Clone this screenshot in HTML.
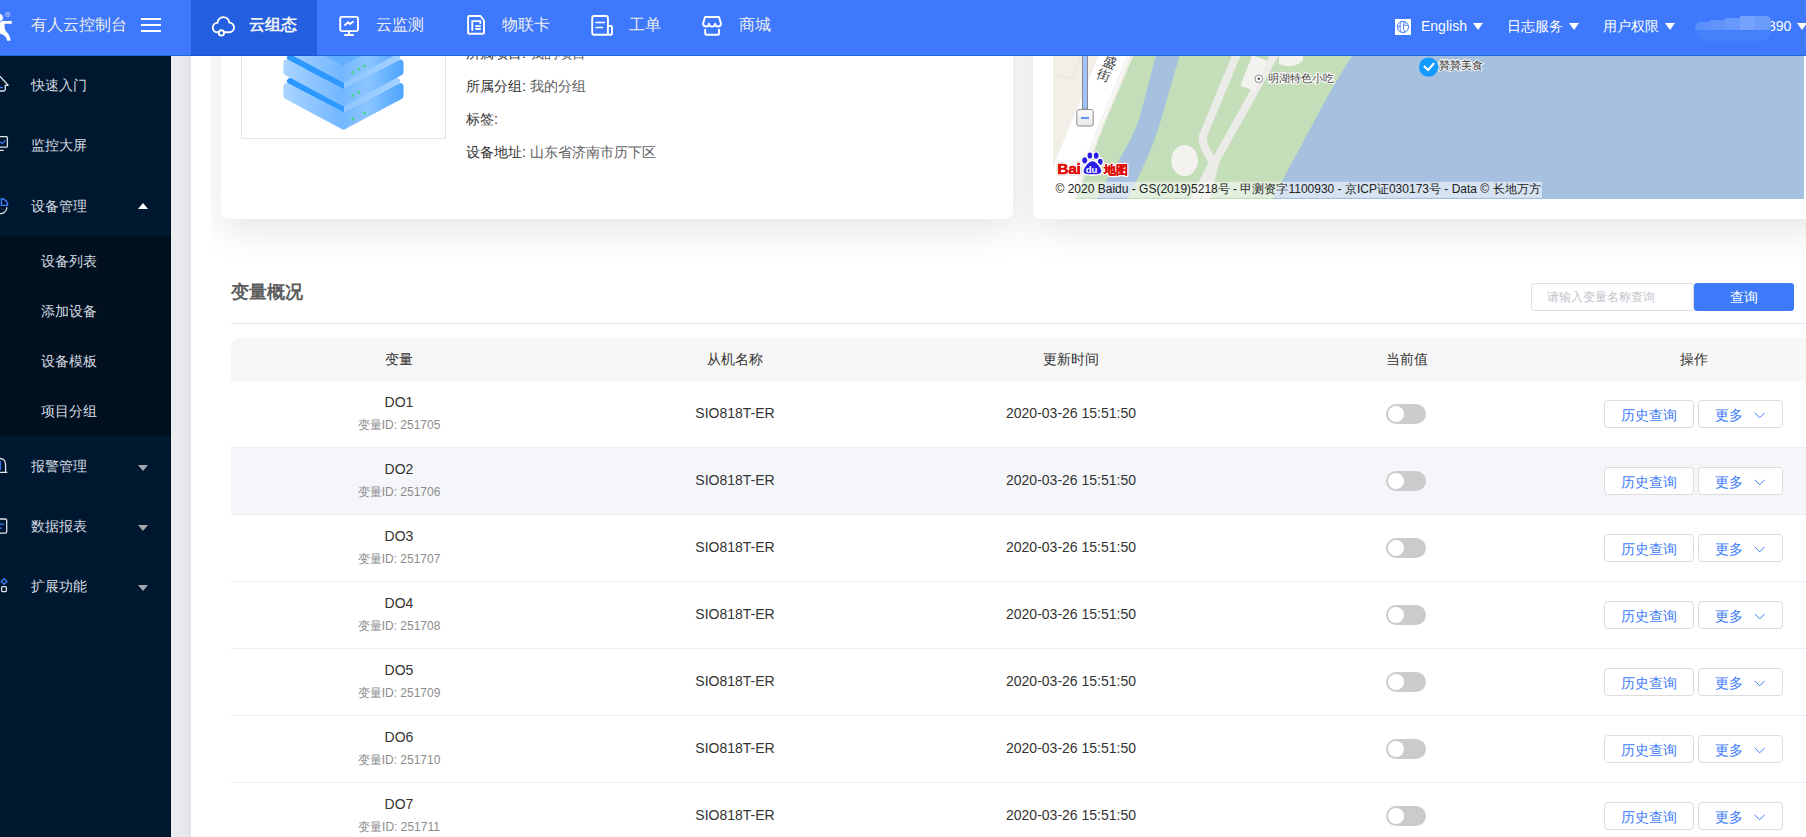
<!DOCTYPE html>
<html><head><meta charset="utf-8">
<style>
*{box-sizing:border-box;margin:0;padding:0}
html,body{width:1806px;height:837px;overflow:hidden;background:#fff;font-family:"Liberation Sans",sans-serif;position:relative}
.abs{position:absolute}
svg{position:absolute;overflow:visible}
#hdr{left:0;top:0;width:1806px;height:56px;background:#3d78fd;border-bottom:1px solid #1b6dd3;z-index:10}
#side{left:0;top:56px;width:171px;height:781px;background:#00182f;z-index:5}
#strip{left:171px;top:56px;width:20px;height:781px;background:linear-gradient(90deg,#eceef0,#e2e4e7)}
.nav{position:absolute;top:0;height:55px;color:#ecedf2;font-size:16px;line-height:50px;white-space:nowrap}
.hr{position:absolute;top:0;height:55px;color:#fff;font-size:14px;line-height:52px;white-space:nowrap}
.tri{position:absolute;width:0;height:0;border-left:5.5px solid transparent;border-right:5.5px solid transparent;border-top:7px solid #fff}
.mi{position:absolute;left:31px;font-size:14px;color:#d5dae2;line-height:20px;white-space:nowrap}
.si{position:absolute;left:41px;font-size:14px;color:#d5dae2;line-height:20px;white-space:nowrap}
.dtri{position:absolute;left:138px;width:0;height:0;border-left:5px solid transparent;border-right:5px solid transparent;border-top:6px solid #a3a7ae}
.card{position:absolute;background:#fff;border-radius:8px}
.info{position:absolute;left:466px;font-size:14px;color:#333;line-height:20px;white-space:nowrap}
.info span{color:#5e5e5e}
.th{position:absolute;top:338px;height:43px;line-height:43px;font-size:14px;color:#333;text-align:center}
.row{position:absolute;left:231px;width:1600px;height:67px;border-bottom:1px solid #ebeef5}
.c{position:absolute;text-align:center;white-space:nowrap}
.btn{position:absolute;height:28px;border:1px solid #dcdcdc;border-radius:4px;background:#fff;color:#3e7bfa;font-size:14px;line-height:26px;text-align:center;white-space:nowrap}
.tog{position:absolute;left:1386px;width:40px;height:20px;border-radius:10px;background:#cbcbcb}
.tog:after{content:"";position:absolute;left:2px;top:2px;width:16px;height:16px;border-radius:50%;background:#fff}
</style></head><body>
<!-- sidebar -->
<div id="side" class="abs">
  <div class="abs" style="left:0;top:180px;width:171px;height:200px;background:#00101f"></div>
  <svg style="left:0;top:0" width="20" height="781" viewBox="0 56 20 781">
    <!-- home -->
    <path d="M-3 80 L0.3 76.6 L8.1 85.3 H5.3 V89.5 Q5.3 91 3.8 91 H-3" fill="none" stroke="#dfe3ea" stroke-width="1.3" stroke-linejoin="round"/>
    <path d="M-1 87.5 H2.9" stroke="#3d7bf8" stroke-width="1.3"/>
    <!-- monitor -->
    <path d="M-3 136.7 H6.3 Q7.4 136.7 7.4 137.8 V146.2 Q7.4 147.2 6.3 147.2 H-3" fill="none" stroke="#dfe3ea" stroke-width="1.3"/>
    <path d="M-1 150.4 H3.7" stroke="#dfe3ea" stroke-width="1.3"/>
    <path d="M-1 141.6 L2.4 143.4 L5.4 140.4" fill="none" stroke="#3d7bf8" stroke-width="1.3"/>
    <!-- pie -->
    <path d="M1.4 198.7 A6.3 6.3 0 0 1 7.6 205.4 H1.4 Z" fill="none" stroke="#3d7bf8" stroke-width="1.4"/>
    <path d="M6.9 207.2 A6.4 6.4 0 0 1 -1 213.4" fill="none" stroke="#dfe3ea" stroke-width="1.3"/>
    <!-- bell -->
    <path d="M-3 458.6 Q5.6 457.6 5.6 464.5 V472.4 H7.3 M-3 472.4 H6" fill="none" stroke="#dfe3ea" stroke-width="1.3"/>
    <path d="M0.3 461 V470" stroke="#3d7bf8" stroke-width="1.3"/>
    <!-- data -->
    <path d="M-3 519 H5.4 Q6.7 519 6.7 520.3 V531.8 Q6.7 533.1 5.4 533.1 H-3" fill="none" stroke="#dfe3ea" stroke-width="1.3"/>
    <path d="M-1 524.2 H3.9 M-1 528.2 H1.9" stroke="#3d7bf8" stroke-width="1.3"/>
    <!-- ext -->
    <path d="M4.1 578.7 L6.9 581.5 L4.1 584.3 L1.3 581.5 Z" fill="none" stroke="#3d7bf8" stroke-width="1.3"/>
    <rect x="1.6" y="586.7" width="4.8" height="4.9" rx="1" fill="none" stroke="#dfe3ea" stroke-width="1.3"/>
  </svg>
  <div class="mi" style="top:19px">快速入门</div>
  <div class="mi" style="top:79px">监控大屏</div>
  <div class="mi" style="top:140px">设备管理</div>
  <div class="abs" style="left:137.7px;top:146.7px;width:0;height:0;border-left:5.3px solid transparent;border-right:5.3px solid transparent;border-bottom:6.4px solid #fff"></div>
  <div class="si" style="top:195px">设备列表</div>
  <div class="si" style="top:245px">添加设备</div>
  <div class="si" style="top:295px">设备模板</div>
  <div class="si" style="top:345px">项目分组</div>
  <div class="mi" style="top:400px">报警管理</div>
  <div class="dtri" style="top:408.8px"></div>
  <div class="mi" style="top:460px">数据报表</div>
  <div class="dtri" style="top:468.8px"></div>
  <div class="mi" style="top:520px">扩展功能</div>
  <div class="dtri" style="top:528.8px"></div>
</div>
<div id="strip" class="abs"></div>
<!-- top cards -->
<div class="abs" style="left:211px;top:0;width:1595px;height:300px;overflow:hidden">
<div class="card" style="left:10px;top:-40px;width:792px;height:259px;box-shadow:0 12px 36px rgba(0,0,0,0.1)"></div>
<div class="card" style="left:822px;top:-40px;width:800px;height:259px;box-shadow:0 12px 36px rgba(0,0,0,0.1)"></div>
<div class="card" style="left:10px;top:-40px;width:792px;height:259px"></div>
<div class="card" style="left:822px;top:-40px;width:800px;height:259px"></div>
</div>
<div class="abs" style="left:241px;top:-40px;width:205px;height:179px;border:1px solid #e6e6e6"></div>
<svg style="left:241px;top:0" width="205" height="139" viewBox="241 0 205 139">
  <defs>
    <linearGradient id="sb" x1="283.5" x2="403.5" y1="0" y2="0" gradientUnits="userSpaceOnUse">
      <stop offset="0" stop-color="#aad4ff"/><stop offset="0.49" stop-color="#72b7ff"/><stop offset="0.51" stop-color="#76b9ff"/><stop offset="0.7" stop-color="#8cc5ff"/><stop offset="1" stop-color="#4ba4ff"/>
    </linearGradient>
    <linearGradient id="tf" x1="283.5" x2="403.5" y1="0" y2="0" gradientUnits="userSpaceOnUse">
      <stop offset="0" stop-color="#2a96ff"/><stop offset="0.5" stop-color="#2f99ff"/><stop offset="0.5" stop-color="#8fc7ff"/><stop offset="1" stop-color="#a4d1ff"/>
    </linearGradient>
    <g id="slab">
      <polygon points="289.92,81.16 343.50,52.40 397.08,81.16 343.50,109.02" fill="url(#tf)" stroke="url(#tf)" stroke-width="6" stroke-linejoin="round"/>
      <polygon points="286.50,86.14 343.50,115.78 400.50,86.14 400.50,96.01 343.50,126.60 286.50,96.01" fill="url(#sb)" stroke="url(#sb)" stroke-width="6" stroke-linejoin="round"/>
    </g>
  </defs>
  <use href="#slab"/>
  <use href="#slab" transform="translate(0,-23.6)"/>
  <g transform="translate(0,-47.2)">
    <polygon points="289.92,81.16 343.50,52.40 397.08,81.16 343.50,109.02" fill="#62afff" stroke="#62afff" stroke-width="6" stroke-linejoin="round"/>
    <polygon points="286.50,86.14 343.50,115.78 400.50,86.14 400.50,96.01 343.50,126.60 286.50,96.01" fill="url(#sb)" stroke="url(#sb)" stroke-width="6" stroke-linejoin="round"/>
  </g>
  <g fill="#44d882">
    <ellipse cx="352.7" cy="119" rx="1.4" ry="1.5"/><ellipse cx="364.6" cy="112.8" rx="1.4" ry="1.5"/>
    <ellipse cx="352.7" cy="95.6" rx="1.4" ry="1.5"/><ellipse cx="358.6" cy="92.3" rx="1.4" ry="1.5"/>
    <ellipse cx="352.7" cy="72.4" rx="1.4" ry="1.5"/><ellipse cx="358.6" cy="69" rx="1.4" ry="1.5"/><ellipse cx="364.6" cy="66" rx="1.4" ry="1.5"/>
  </g>
</svg>
<div class="info" style="top:43px">所属项目: <span>我的项目</span></div>
<div class="info" style="top:76px">所属分组: <span>我的分组</span></div>
<div class="info" style="top:109px">标签:</div>
<div class="info" style="top:142px">设备地址: <span>山东省济南市历下区</span></div>

<!-- map -->
<svg style="left:1053px;top:40px;overflow:hidden" width="751" height="159" viewBox="1053 40 751 159">
  <rect x="1053" y="40" width="751" height="159" fill="#f2efe9"/>
  <path d="M1055 165 L1067 140" stroke="#e4e1db" stroke-width="0.8"/>
  <path d="M1053 73 L1073 79 L1085 45" fill="none" stroke="#e4e1db" stroke-width="0.8"/>
  <polygon points="1105,40 1136,40 1072,199 1040,199" fill="#ffffff"/>
  <path d="M1134 40 L1070 199" stroke="#e2dfd9" stroke-width="0.8"/>
  <polygon points="1140,40 1804,40 1804,199 1076,199 1104,125" fill="#c3deb9"/>
  <path d="M1160,40 L1139,120 C1128,150 1108,175 1097,199 L1127,199 C1140,175 1152,150 1161,120 L1184,40 Z" fill="#a6c0e0"/>
  <path d="M1239 40 L1236 56 L1203 136 C1201 145 1209 155 1213 162 L1192 205" fill="none" stroke="#ebebe7" stroke-width="8"/>
  <path d="M1283 40 L1216 160 L1204 205" fill="none" stroke="#ebebe7" stroke-width="8"/>
  <ellipse cx="1184.6" cy="160.5" rx="13.3" ry="15.5" fill="#f4f2ee"/>
  <polygon points="1252.3,55 1267.5,61 1256,91.4 1240.4,85.7" fill="#f4f2ee"/>
  <path d="M1279 40 H1303 V60 Q1298 67 1285 66 L1279 64 Z" fill="#f4f2ee"/>
  <path d="M1362,40 L1352,56 C1340,75 1330,92 1324,103 C1310,130 1290,165 1273,199 L1804,199 L1804,40 Z" fill="#a6c0e0"/>
  <!-- zoom slider -->
  <rect x="1082.5" y="40" width="5" height="69" fill="#9ec2ff" stroke="#8a8a8a" stroke-width="1"/>
  <path d="M1083 50 H1087 M1083 56 H1087 M1083 62 H1087 M1083 68 H1087 M1083 74 H1087 M1083 80 H1087 M1083 86 H1087 M1083 92 H1087 M1083 98 H1087 M1083 104 H1087" stroke="#b8d2ff" stroke-width="0.6"/>
  <defs><linearGradient id="zb" x1="0" x2="0" y1="0" y2="1"><stop offset="0" stop-color="#fff"/><stop offset="1" stop-color="#e6e6e6"/></linearGradient></defs>
  <rect x="1076.8" y="109.6" width="16.4" height="16.4" rx="2" fill="url(#zb)" stroke="#8c8c8c" stroke-width="1"/>
  <path d="M1081 118 H1089" stroke="#3d7bf0" stroke-width="1.6"/>
  <!-- street label -->
  <text font-size="13.5" fill="#333" transform="translate(1110.3,62.4) rotate(22)" font-family="Liberation Sans, sans-serif" text-anchor="middle" dominant-baseline="central">盛</text>
  <text font-size="13.5" fill="#333" transform="translate(1104.3,75.4) rotate(22)" font-family="Liberation Sans, sans-serif" text-anchor="middle" dominant-baseline="central">街</text>
  <!-- poi -->
  <circle cx="1258.8" cy="78.8" r="3.8" fill="#fff" stroke="#777" stroke-width="0.8"/>
  <circle cx="1258.8" cy="78.8" r="1.3" fill="#555"/>
  <text x="1267.5" y="82.3" font-size="11" fill="#444" stroke="#fff" stroke-width="2" paint-order="stroke" font-family="Liberation Sans, sans-serif">明湖特色小吃</text>
  <!-- marker -->
  <circle cx="1428.6" cy="67.1" r="9.6" fill="#129afe"/>
  <path d="M1424.4 66.6 L1428.1 70.1 L1433.5 63.8" fill="none" stroke="#fff" stroke-width="2.1" stroke-linecap="round" stroke-linejoin="round"/>
  <text x="1438.5" y="69" font-size="10.5" fill="#3a3a3a" stroke="#fff" stroke-width="1.6" paint-order="stroke" font-family="Liberation Sans, sans-serif">贊贊美食</text>
  <!-- baidu logo -->
  <g stroke="#fff" stroke-width="3.2" stroke-linejoin="round" paint-order="stroke" style="filter:drop-shadow(0 0 0.6px rgba(0,0,0,0.35))">
    <text x="1057.3" y="173.9" font-size="15.5" font-weight="bold" fill="#e10a0a" font-family="Liberation Sans, sans-serif" letter-spacing="-0.3">Bai</text>
    <ellipse cx="1084.7" cy="160.3" rx="2.5" ry="3.1" fill="#2a1ee6"/>
    <ellipse cx="1089.9" cy="155.5" rx="2.4" ry="3.1" fill="#2a1ee6"/>
    <ellipse cx="1096.2" cy="155.7" rx="2.4" ry="3.1" fill="#2a1ee6"/>
    <ellipse cx="1100.2" cy="161.8" rx="2.4" ry="3.1" fill="#2a1ee6"/>
    <path d="M1092.4 161.2 C1096 161.2 1101.3 168 1101.3 171 C1101.3 174.5 1097 174.3 1092.4 174.3 C1087.8 174.3 1083.6 174.5 1083.6 171 C1083.6 168 1088.8 161.2 1092.4 161.2 Z" fill="#2a1ee6"/>
    <text x="1104" y="173.9" font-size="11.5" font-weight="bold" fill="#e10a0a" font-family="Liberation Sans, sans-serif">地图</text>
  </g>
  <text x="1085.8" y="173.3" font-size="9.5" font-weight="bold" fill="#fff" font-family="Liberation Sans, sans-serif">du</text>
  <text x="1104" y="173.9" font-size="11.5" font-weight="bold" fill="#e10a0a" stroke="#e10a0a" stroke-width="0.2" font-family="Liberation Sans, sans-serif">地图</text>
  <text x="1057.3" y="173.9" font-size="15.5" font-weight="bold" fill="#e10a0a" stroke="#e10a0a" stroke-width="0.4" font-family="Liberation Sans, sans-serif" letter-spacing="-0.3">Bai</text>
  <!-- copyright -->
  <rect x="1053" y="181.8" width="489" height="16" fill="rgba(255,255,255,0.55)"/>
  <text x="1055.5" y="192.8" font-size="12" fill="#222" font-family="Liberation Sans, sans-serif">© 2020 Baidu - GS(2019)5218号 - 甲测资字1100930 - 京ICP证030173号 - Data © 长地万方</text>
</svg>
<!-- header -->
<div id="hdr" class="abs">
  <div class="abs" style="left:191px;top:0;width:126px;height:56px;background:#245fe0;border-bottom:1px solid #1c55df"></div>
  <!-- logo figure -->
  <svg style="left:0;top:0" width="20" height="50" viewBox="0 0 20 50">
        <path d="M0 20.9 H11.8 V23.7 H4.6 C4.4 27 4.8 30.5 6.8 32.3 C9.3 34.6 10.3 37.5 10.6 40.8 H7.1 C6.7 37.8 5.2 35.2 0 33.6 Z" fill="#fff"/>
    <circle cx="-0.9" cy="17.6" r="4.3" fill="#fff" stroke="#3d78fd" stroke-width="0.9"/>
    <circle cx="7.7" cy="14.5" r="2.2" fill="none" stroke="#c3d4fd" stroke-width="0.7"/>
    <path d="M7 15.8 V13.2 H8.1 Q8.9 13.3 8.6 14.2 Q8.3 14.6 7.4 14.6 L8.6 15.8" fill="none" stroke="#c3d4fd" stroke-width="0.5"/>
  </svg>
  <div class="nav" style="left:31px;color:#ececec">有人云控制台</div>
  <div class="abs" style="left:141px;top:18px;width:20px;height:2.4px;background:#fff"></div>
  <div class="abs" style="left:141px;top:24px;width:20px;height:2.4px;background:#fff"></div>
  <div class="abs" style="left:141px;top:30px;width:20px;height:2.4px;background:#fff"></div>
  <!-- cloud -->
  <svg style="left:205px;top:10px" width="40" height="32" viewBox="0 0 40 32">
    <path d="M12.6 22.3 A4.7 4.7 0 0 1 12.4 12.9 A6 6 0 0 1 24.37 12.6 A4.8 4.8 0 0 1 24.1 22.2 Z" fill="none" stroke="#fff" stroke-width="1.9" stroke-linejoin="round"/>
    <circle cx="16.4" cy="22.9" r="2.6" fill="#245fe0" stroke="#fff" stroke-width="1.9"/>
  </svg>
  <div class="nav" style="left:249px;font-weight:bold;color:#eef0f6">云组态</div>
  <!-- monitor -->
  <svg style="left:334px;top:10px" width="32" height="32" viewBox="334 10 32 32">
    <rect x="340.2" y="16.9" width="17.8" height="14.2" rx="1.5" fill="none" stroke="#fff" stroke-width="1.9"/>
    <path d="M349 32 V34.5 M344.2 35 H353.8" stroke="#fff" stroke-width="1.9" fill="none"/>
    <path d="M345 25 L348.1 22.3 L350 24 L353 21.8" stroke="#fff" stroke-width="1.9" fill="none" stroke-linecap="round" stroke-linejoin="round"/>
  </svg>
  <div class="nav" style="left:376px">云监测</div>
  <!-- sim -->
  <svg style="left:460px;top:10px" width="32" height="32" viewBox="460 10 32 32">
    <path d="M468.1 17 Q468.1 16 469.1 16 H480.5 L484 20.5 V32.8 Q484 33.8 483 33.8 H469.1 Q468.1 33.8 468.1 32.8 Z" fill="none" stroke="#fff" stroke-width="1.9" stroke-linejoin="round"/>
    <path d="M472.3 30 V21.1 H480.3 V23" fill="none" stroke="#fff" stroke-width="1.9" stroke-linecap="round"/>
    <path d="M476 26.1 H480.2 M476 29 H480.2" fill="none" stroke="#fff" stroke-width="1.8" stroke-linecap="round"/>
  </svg>
  <div class="nav" style="left:502px">物联卡</div>
  <!-- work order -->
  <svg style="left:586px;top:10px" width="32" height="32" viewBox="586 10 32 32">
    <path d="M607.9 34.8 H594.2 Q592.2 34.8 592.2 32.8 V18 Q592.2 16 594.2 16 H605.9 Q607.9 16 607.9 18 V34.8 M607.9 26 H611 Q612 26 612 27 V33.8 Q612 34.8 611 34.8 H607.9" fill="none" stroke="#fff" stroke-width="1.9" stroke-linejoin="round"/>
    <path d="M596 22.6 H604.3 M596 27.5 H602.5" stroke="#fff" stroke-width="1.5" stroke-linecap="round"/>
  </svg>
  <div class="nav" style="left:629px">工单</div>
  <!-- shop -->
  <svg style="left:696px;top:10px" width="32" height="32" viewBox="696 10 32 32">
    <path d="M705 17 H719 L721 23.6 A2.95 2.95 0 0 1 715.1 23.6 A3.05 3.05 0 0 1 709 23.6 A2.95 2.95 0 0 1 703.1 23.6 Z" fill="none" stroke="#fff" stroke-width="1.9" stroke-linejoin="round"/>
    <path d="M705.2 29.1 V33.8 Q705.2 34.8 706.2 34.8 H718 Q719 34.8 719 33.8 V29.1" fill="none" stroke="#fff" stroke-width="1.9"/>
  </svg>
  <div class="nav" style="left:739px">商城</div>
  <!-- globe square -->
  <div class="abs" style="left:1395px;top:19px;width:16px;height:16px;background:#fff"></div>
  <svg style="left:1395px;top:19px" width="16" height="16" viewBox="1395 19 16 16">
    <circle cx="1402.9" cy="26.9" r="5.6" fill="none" stroke="#3e7bfa" stroke-width="1"/>
    <path d="M1401.5 21.5 C1399.5 24 1399.5 29.5 1401.5 32.3 M1404.3 21.5 C1402.8 24 1402.8 29.5 1405 32.3 M1397.5 26.5 H1401 M1403.5 25.3 H1408.3 M1404.5 24 L1406 22.6" fill="none" stroke="#3d78fd" stroke-width="0.9"/>
  </svg>
  <div class="hr" style="left:1421px">English</div><div class="tri" style="left:1473px;top:23px"></div>
  <div class="hr" style="left:1507px">日志服务</div><div class="tri" style="left:1569px;top:23px"></div>
  <div class="hr" style="left:1603px">用户权限</div><div class="tri" style="left:1665px;top:23px"></div>
  <!-- blurred user name -->
  <div class="abs" style="left:1696px;top:30px;width:76px;height:11px;background:#4581fa;border-radius:0 0 12px 12px;filter:blur(1px)"></div>
  <div class="abs" style="left:1695px;top:22px;width:16px;height:8px;background:#5c90fb;border-radius:6px 0 0 3px;filter:blur(0.6px)"></div>
  <div class="abs" style="left:1710px;top:19.5px;width:16px;height:10.5px;background:#6194fb;filter:blur(0.6px)"></div>
  <div class="abs" style="left:1725px;top:18px;width:16px;height:12px;background:#6798fb;filter:blur(0.6px)"></div>
  <div class="abs" style="left:1740px;top:16px;width:16px;height:14px;background:#75a2fc;filter:blur(0.6px)"></div>
  <div class="abs" style="left:1755px;top:16px;width:16px;height:14px;background:#6b9cfb;border-radius:0 5px 3px 0;filter:blur(0.6px)"></div>
  <div class="hr" style="left:1771px;overflow:hidden;width:22px"><span style="margin-left:-3px">390</span></div><div class="tri" style="left:1797px;top:23px"></div>
</div>
<!-- lower card -->
<div class="card" style="left:211px;top:258px;width:1630px;height:700px"></div>
<div class="abs" style="left:231px;top:282px;font-size:18px;font-weight:bold;color:#5c5c5c;line-height:20px">变量概况</div>
<div class="abs" style="left:231px;top:323px;width:1600px;height:1px;background:#e6e9f0"></div>
<div class="abs" style="left:1531px;top:283px;width:163px;height:28px;border:1px solid #dcdfe6;border-radius:3px;font-size:12px;color:#c0c4cc;line-height:26px;padding-left:15px;white-space:nowrap">请输入变量名称查询</div>
<div class="abs" style="left:1694px;top:283px;width:100px;height:28px;background:#3e7bfa;border-radius:3px;color:#fff;font-size:14px;line-height:28px;text-align:center">查询</div>
<div class="abs" style="left:231px;top:338px;width:1600px;height:43px;background:#f7f7f7;border-radius:8px 0 0 0"></div>
<div class="th" style="left:231px;width:336px">变量</div>
<div class="th" style="left:567px;width:336px">从机名称</div>
<div class="th" style="left:903px;width:336px">更新时间</div>
<div class="th" style="left:1239px;width:336px">当前值</div>
<div class="th" style="left:1575px;width:238px">操作</div>
<div class="row" style="top:381px;background:#fff">
  <div class="c" style="left:0;width:336px;top:11px;font-size:14px;color:#333;line-height:20px">DO1</div>
  <div class="c" style="left:0;width:336px;top:36px;font-size:12px;color:#8c8c8c;line-height:16px">变量ID: 251705</div>
  <div class="c" style="left:336px;width:336px;top:22px;font-size:14px;color:#333;line-height:20px">SIO818T-ER</div>
  <div class="c" style="left:672px;width:336px;top:22px;font-size:14px;color:#333;line-height:20px">2020-03-26 15:51:50</div>
</div>
<div class="tog" style="top:404px"></div>
<div class="btn" style="left:1604px;top:400px;width:90px;padding-top:1px">历史查询</div>
<div class="btn" style="left:1698px;top:400px;width:85px;text-align:left;padding-left:16px;padding-top:1px">更多<svg style="left:55px;top:10.5px" width="12" height="7" viewBox="0 0 12 7"><path d="M0.7 0.8 L5.7 5.8 L10.7 0.8" fill="none" stroke="#3e7bfa" stroke-width="1"/></svg></div>
<div class="row" style="top:448px;background:#f5f6fa">
  <div class="c" style="left:0;width:336px;top:11px;font-size:14px;color:#333;line-height:20px">DO2</div>
  <div class="c" style="left:0;width:336px;top:36px;font-size:12px;color:#8c8c8c;line-height:16px">变量ID: 251706</div>
  <div class="c" style="left:336px;width:336px;top:22px;font-size:14px;color:#333;line-height:20px">SIO818T-ER</div>
  <div class="c" style="left:672px;width:336px;top:22px;font-size:14px;color:#333;line-height:20px">2020-03-26 15:51:50</div>
</div>
<div class="tog" style="top:471px"></div>
<div class="btn" style="left:1604px;top:467px;width:90px;padding-top:1px">历史查询</div>
<div class="btn" style="left:1698px;top:467px;width:85px;text-align:left;padding-left:16px;padding-top:1px">更多<svg style="left:55px;top:10.5px" width="12" height="7" viewBox="0 0 12 7"><path d="M0.7 0.8 L5.7 5.8 L10.7 0.8" fill="none" stroke="#3e7bfa" stroke-width="1"/></svg></div>
<div class="row" style="top:515px;background:#fff">
  <div class="c" style="left:0;width:336px;top:11px;font-size:14px;color:#333;line-height:20px">DO3</div>
  <div class="c" style="left:0;width:336px;top:36px;font-size:12px;color:#8c8c8c;line-height:16px">变量ID: 251707</div>
  <div class="c" style="left:336px;width:336px;top:22px;font-size:14px;color:#333;line-height:20px">SIO818T-ER</div>
  <div class="c" style="left:672px;width:336px;top:22px;font-size:14px;color:#333;line-height:20px">2020-03-26 15:51:50</div>
</div>
<div class="tog" style="top:538px"></div>
<div class="btn" style="left:1604px;top:534px;width:90px;padding-top:1px">历史查询</div>
<div class="btn" style="left:1698px;top:534px;width:85px;text-align:left;padding-left:16px;padding-top:1px">更多<svg style="left:55px;top:10.5px" width="12" height="7" viewBox="0 0 12 7"><path d="M0.7 0.8 L5.7 5.8 L10.7 0.8" fill="none" stroke="#3e7bfa" stroke-width="1"/></svg></div>
<div class="row" style="top:582px;background:#fff">
  <div class="c" style="left:0;width:336px;top:11px;font-size:14px;color:#333;line-height:20px">DO4</div>
  <div class="c" style="left:0;width:336px;top:36px;font-size:12px;color:#8c8c8c;line-height:16px">变量ID: 251708</div>
  <div class="c" style="left:336px;width:336px;top:22px;font-size:14px;color:#333;line-height:20px">SIO818T-ER</div>
  <div class="c" style="left:672px;width:336px;top:22px;font-size:14px;color:#333;line-height:20px">2020-03-26 15:51:50</div>
</div>
<div class="tog" style="top:605px"></div>
<div class="btn" style="left:1604px;top:601px;width:90px;padding-top:1px">历史查询</div>
<div class="btn" style="left:1698px;top:601px;width:85px;text-align:left;padding-left:16px;padding-top:1px">更多<svg style="left:55px;top:10.5px" width="12" height="7" viewBox="0 0 12 7"><path d="M0.7 0.8 L5.7 5.8 L10.7 0.8" fill="none" stroke="#3e7bfa" stroke-width="1"/></svg></div>
<div class="row" style="top:649px;background:#fff">
  <div class="c" style="left:0;width:336px;top:11px;font-size:14px;color:#333;line-height:20px">DO5</div>
  <div class="c" style="left:0;width:336px;top:36px;font-size:12px;color:#8c8c8c;line-height:16px">变量ID: 251709</div>
  <div class="c" style="left:336px;width:336px;top:22px;font-size:14px;color:#333;line-height:20px">SIO818T-ER</div>
  <div class="c" style="left:672px;width:336px;top:22px;font-size:14px;color:#333;line-height:20px">2020-03-26 15:51:50</div>
</div>
<div class="tog" style="top:672px"></div>
<div class="btn" style="left:1604px;top:668px;width:90px;padding-top:1px">历史查询</div>
<div class="btn" style="left:1698px;top:668px;width:85px;text-align:left;padding-left:16px;padding-top:1px">更多<svg style="left:55px;top:10.5px" width="12" height="7" viewBox="0 0 12 7"><path d="M0.7 0.8 L5.7 5.8 L10.7 0.8" fill="none" stroke="#3e7bfa" stroke-width="1"/></svg></div>
<div class="row" style="top:716px;background:#fff">
  <div class="c" style="left:0;width:336px;top:11px;font-size:14px;color:#333;line-height:20px">DO6</div>
  <div class="c" style="left:0;width:336px;top:36px;font-size:12px;color:#8c8c8c;line-height:16px">变量ID: 251710</div>
  <div class="c" style="left:336px;width:336px;top:22px;font-size:14px;color:#333;line-height:20px">SIO818T-ER</div>
  <div class="c" style="left:672px;width:336px;top:22px;font-size:14px;color:#333;line-height:20px">2020-03-26 15:51:50</div>
</div>
<div class="tog" style="top:739px"></div>
<div class="btn" style="left:1604px;top:735px;width:90px;padding-top:1px">历史查询</div>
<div class="btn" style="left:1698px;top:735px;width:85px;text-align:left;padding-left:16px;padding-top:1px">更多<svg style="left:55px;top:10.5px" width="12" height="7" viewBox="0 0 12 7"><path d="M0.7 0.8 L5.7 5.8 L10.7 0.8" fill="none" stroke="#3e7bfa" stroke-width="1"/></svg></div>
<div class="row" style="top:783px;background:#fff">
  <div class="c" style="left:0;width:336px;top:11px;font-size:14px;color:#333;line-height:20px">DO7</div>
  <div class="c" style="left:0;width:336px;top:36px;font-size:12px;color:#8c8c8c;line-height:16px">变量ID: 251711</div>
  <div class="c" style="left:336px;width:336px;top:22px;font-size:14px;color:#333;line-height:20px">SIO818T-ER</div>
  <div class="c" style="left:672px;width:336px;top:22px;font-size:14px;color:#333;line-height:20px">2020-03-26 15:51:50</div>
</div>
<div class="tog" style="top:806px"></div>
<div class="btn" style="left:1604px;top:802px;width:90px;padding-top:1px">历史查询</div>
<div class="btn" style="left:1698px;top:802px;width:85px;text-align:left;padding-left:16px;padding-top:1px">更多<svg style="left:55px;top:10.5px" width="12" height="7" viewBox="0 0 12 7"><path d="M0.7 0.8 L5.7 5.8 L10.7 0.8" fill="none" stroke="#3e7bfa" stroke-width="1"/></svg></div>
</body></html>
